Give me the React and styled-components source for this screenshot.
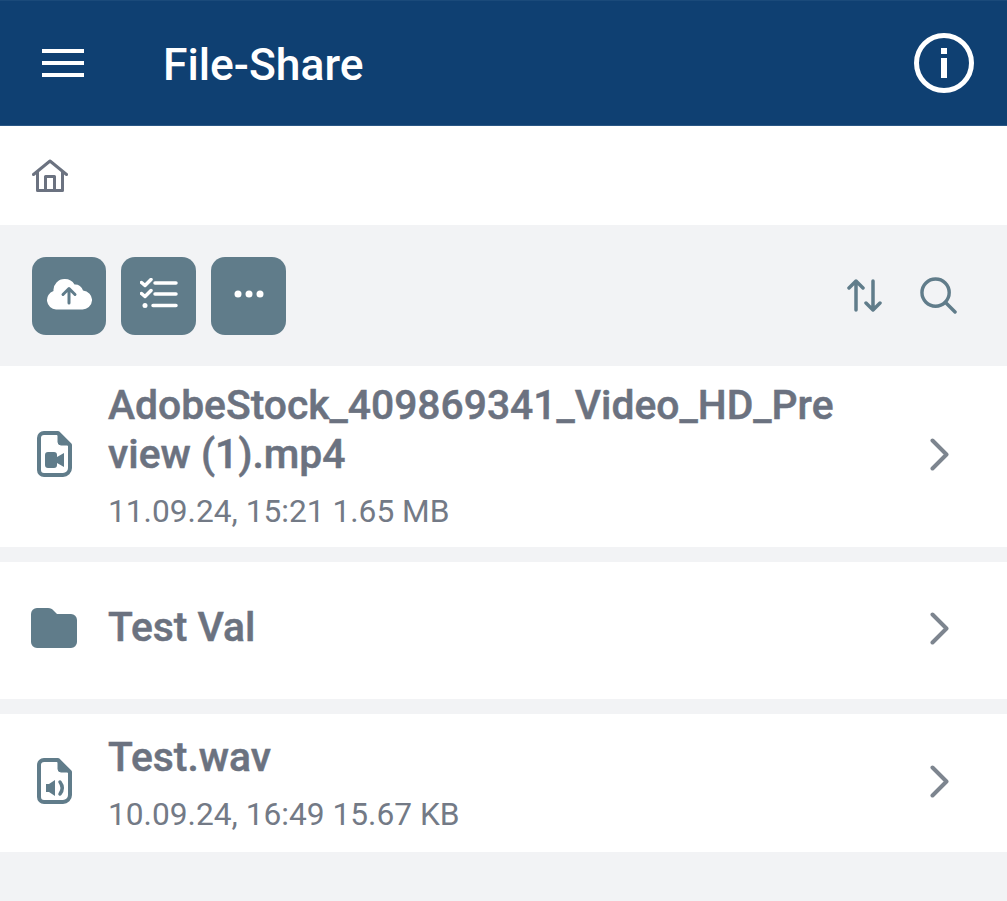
import styled, { createGlobalStyle } from "styled-components";

const GlobalStyle = createGlobalStyle`
    html, body {
        margin: 0;
        padding: 0;
        background: #f2f3f5;
    }
    * {
        box-sizing: border-box;
    }
`;
const Page = styled.div`
    width: 1007px;
    height: 901px;
    overflow: hidden;
    background: #f2f3f5;
    font-family: Roboto, "Liberation Sans", sans-serif;
`;
const Header = styled.header`
    height: 126px;
    background: #0f4072;
    border-top: 1px solid #1a4a7a;
    border-bottom: 1px solid #2a5785;
    display: flex;
    align-items: center;
    padding: 0 33px 0 42px;
    color: #fff;
`;
const Menu = styled.svg`
    width: 42px;
    height: 28px;
    display: block;
`;
const Title = styled.h1`
    flex: 1;
    margin: 3px 0 0 79px;
    font-size: 44.4px;
    line-height: 50px;
    font-weight: 500;
`;
const Breadcrumb = styled.nav`
    height: 99px;
    background: #fff;
    display: flex;
    align-items: center;
    padding: 0 0 0 32px;
`;
const Toolbar = styled.div`
    height: 141px;
    display: flex;
    align-items: center;
    padding: 0 50px 0 32px;
`;
const Actions = styled.div`
    flex: 1;
    display: flex;
    gap: 15px;
    margin-top: 1px;
`;
const Action = styled.button`
    width: ${props => props.$width}px;
    height: 78px;
    border: 0;
    padding: 0 0 4px;
    border-radius: 14px;
    background: #607c8a;
    display: flex;
    align-items: center;
    justify-content: center;
`;
const Tools = styled.div`
    display: flex;
    align-items: center;
    gap: 38px;
    margin-top: -1px;
`;
const List = styled.div`
    display: flex;
    flex-direction: column;
    gap: 15px;
`;
const Row = styled.div`
    height: ${props => props.$height}px;
    background: #fff;
    display: flex;
    align-items: center;
    padding: 0 57px 0 31px;
`;
const RowIcon = styled.div`
    width: 77px;
    flex: none;
    display: flex;
    align-items: center;
    padding-left: ${props => props.$indent || 0}px;
    padding-bottom: 5px;
`;
const RowBody = styled.div`
    flex: 1;
    min-width: 0;
    padding-right: 80px;
    padding-bottom: ${props => props.$lift || 0}px;
`;
const Name = styled.div`
    font-size: 40.8px;
    line-height: 49px;
    font-weight: 500;
    color: #6b7280;
    -webkit-text-stroke: 0.5px #6b7280;
    word-break: break-all;
`;
const Meta = styled.div`
    margin-top: 15px;
    font-size: 31.7px;
    line-height: 36px;
    color: #737a86;
`;
const ChevronIcon = styled.svg`
    width: 20px;
    height: 33px;
    flex: none;
    margin-bottom: 4px;
`;

const FileShape = ({ children }) => (
    <svg width="35" height="46" viewBox="0 0 35 46" fill="none">
        <path d="M7 2h14l12 12v23a7 7 0 0 1-7 7H7a5 5 0 0 1-5-5V7a5 5 0 0 1 5-5z" stroke="#607c8a" strokeWidth="4" strokeLinejoin="round" />
        <path d="M21 2l12 12H24a3 3 0 0 1-3-3z" fill="#607c8a" stroke="#607c8a" strokeWidth="1" strokeLinejoin="round" />
        {children}
    </svg>
);

const Chevron = () => (
    <ChevronIcon viewBox="0 0 20 33" fill="none">
        <path d="M2.500 2.500l14 14-14 14" stroke="#7d858f" strokeWidth="4" strokeLinecap="round" strokeLinejoin="round" />
    </ChevronIcon>
);

const App = () => {
    return (
        <Page>
            <GlobalStyle />
            <Header>
                <Menu viewBox="0 0 42 28">
                    <path d="M0 2h42M0 14h42M0 26h42" stroke="#fff" strokeWidth="4" />
                </Menu>
                <Title>File-Share</Title>
                <svg width="60" height="60" viewBox="0 0 60 60" fill="none">
                    <circle cx="30" cy="30" r="27.500" stroke="#fff" strokeWidth="5" />
                    <path d="M27 15h6v6h-6zM27 25h6v20h-6z" fill="#fff" />
                </svg>
            </Header>
            <Breadcrumb>
                <svg width="36" height="33" viewBox="0 0 36 33" fill="none">
                    <path d="M1.500 15.500L18 2l16.500 13.500" stroke="#6b7280" strokeWidth="3" strokeLinecap="round" strokeLinejoin="round" />
                    <path d="M5.500 13v18.500h25V13M13.500 31V17.500h9V31" stroke="#6b7280" strokeWidth="3" strokeLinejoin="round" />
                </svg>
            </Breadcrumb>
            <Toolbar>
                <Actions>
                    <Action $width={74}>
                        <svg width="46" height="32" viewBox="0 0 46 32">
                            <path d="M10 31.500A9.500 9.500 0 0 1 7.500 13 11 11 0 0 1 19 1a11 11 0 0 1 9.500 5.500A8 8 0 0 1 37 12.500 9.500 9.500 0 0 1 36 31.500z" fill="#fff" />
                            <path d="M23 25V11M17 16.500L23 10.500l6 6" stroke="#607c8a" strokeWidth="3" fill="none" strokeLinecap="round" strokeLinejoin="round" />
                        </svg>
                    </Action>
                    <Action $width={75}>
                        <svg width="38" height="32" viewBox="0 0 38 32" fill="none" stroke="#fff" strokeWidth="3.500" strokeLinecap="round" strokeLinejoin="round">
                            <path d="M1.500 4.500l3.500 3L11 1.500M1.500 15.500l3.500 3 6-6M15 5h21M15 16h21M13 27.500h23" />
                            <circle cx="5" cy="27.500" r="2.500" fill="#fff" stroke="none" />
                        </svg>
                    </Action>
                    <Action $width={75}>
                        <svg width="30" height="8" viewBox="0 0 30 8" fill="#fff">
                            <circle cx="4" cy="4" r="3.500" />
                            <circle cx="15" cy="4" r="3.500" />
                            <circle cx="26" cy="4" r="3.500" />
                        </svg>
                    </Action>
                </Actions>
                <Tools>
                    <svg width="35" height="33" viewBox="0 0 35 33" fill="none" stroke="#607c8a" strokeWidth="3.500" strokeLinecap="round" strokeLinejoin="round">
                        <path d="M9 31V2M2 9l7-7 7 7M26 2v29M19 24l7 7 7-7" />
                    </svg>
                    <svg width="37" height="37" viewBox="0 0 38 38" fill="none" stroke="#607c8a" strokeWidth="3.500" strokeLinecap="round">
                        <circle cx="16" cy="16" r="14" />
                        <path d="M26 26l10 10" />
                    </svg>
                </Tools>
            </Toolbar>
            <List>
                <Row $height={181}>
                    <RowIcon $indent={6}>
                        <FileShape>
                            <path d="M8 24a3 3 0 0 1 3-3h6a3 3 0 0 1 3 3v2l7-4v14l-7-4v2a3 3 0 0 1-3 3h-6a3 3 0 0 1-3-3z" fill="#607c8a" />
                        </FileShape>
                    </RowIcon>
                    <RowBody $lift={2}>
                        <Name>AdobeStock_409869341_Video_HD_Preview (1).mp4</Name>
                        <Meta>11.09.24, 15:21 1.65 MB</Meta>
                    </RowBody>
                    <Chevron />
                </Row>
                <Row $height={137}>
                    <RowIcon>
                        <svg width="46" height="40" viewBox="0 0 46 40">
                            <path d="M6 0h11c3 0 4 1 5 2l4 4h14a6 6 0 0 1 6 6v22a6 6 0 0 1-6 6H6a6 6 0 0 1-6-6V6a6 6 0 0 1 6-6z" fill="#607c8a" />
                        </svg>
                    </RowIcon>
                    <RowBody $lift={7}>
                        <Name>Test Val</Name>
                    </RowBody>
                    <Chevron />
                </Row>
                <Row $height={138}>
                    <RowIcon $indent={6}>
                        <FileShape>
                            <path d="M9 26h3l6-4v16l-6-4H9z" fill="#607c8a" />
                            <path d="M23 24c3 4 3 8 0 12" stroke="#607c8a" strokeWidth="3.500" strokeLinecap="round" />
                        </FileShape>
                    </RowIcon>
                    <RowBody>
                        <Name>Test.wav</Name>
                        <Meta>10.09.24, 16:49 15.67 KB</Meta>
                    </RowBody>
                    <Chevron />
                </Row>
            </List>
        </Page>
    );
};

export default App;
